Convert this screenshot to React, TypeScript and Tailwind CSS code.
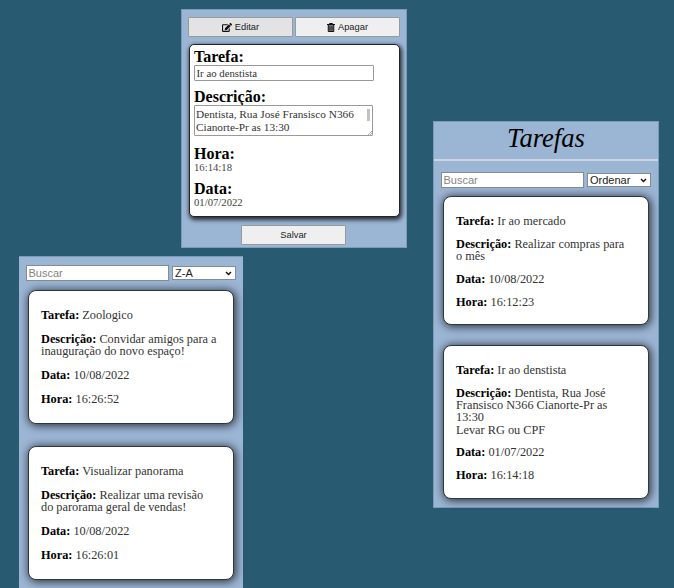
import React from "react";

type Task = { title: string; description: string[]; date: string; time: string };

const recent: Task[] = [
  { title: "Zoologico", description: ["Convidar amigos para a", "inauguração do novo espaço!"], date: "10/08/2022", time: "16:26:52" },
  { title: "Visualizar panorama", description: ["Realizar uma revisão", "do parorama geral de vendas!"], date: "10/08/2022", time: "16:26:01" },
];

const tasks: Task[] = [
  { title: "Ir ao mercado", description: ["Realizar compras para", "o mês"], date: "10/08/2022", time: "16:12:23" },
  { title: "Ir ao denstista", description: ["Dentista, Rua José", "Fransisco N366 Cianorte-Pr as", "13:30", "Levar RG ou CPF"], date: "01/07/2022", time: "16:14:18" },
];

function Label({ children }: { children: React.ReactNode }) {
  return <strong className="font-bold text-black">{children}</strong>;
}

function TaskCard({ task, className }: { task: Task; className: string }) {
  return (
    <article className={`flex w-[206px] shrink-0 flex-col whitespace-nowrap rounded-[8px] border border-[#30363e] bg-white pl-3 text-[12.3px] leading-[12.2px] text-[#333] shadow-[1px_1px_8px_1px_rgba(0,0,0,0.7)] ${className}`}>
      <p><Label>Tarefa:</Label> {task.title}</p>
      <p>
        <Label>Descrição:</Label>{" "}
        {task.description.map((line, i) => (
          <React.Fragment key={line}>{i > 0 && <br />}{line}</React.Fragment>
        ))}
      </p>
      <p><Label>Data:</Label> {task.date}</p>
      <p><Label>Hora:</Label> {task.time}</p>
    </article>
  );
}

function Toolbar({ order, className }: { order: string; className: string }) {
  return (
    <div className={`flex items-center gap-[3px] font-['Liberation_Sans',sans-serif] ${className}`}>
      <input placeholder="Buscar" className="h-4 w-[143px] rounded-none border border-[#858b92] bg-white px-[1.5px] text-[11px] leading-none placeholder:text-[#858585]" />
      <div className="flex h-[14px] w-16 items-center justify-between border border-[#858b92] bg-white pl-[2px] pr-[3px] text-[11px] leading-none text-[#222]">
        <span>{order}</span>
        <svg viewBox="0 0 8 6" className="h-[5px] w-[7px]" fill="none" stroke="#111" strokeWidth="1.7"><path d="M1 1.3 4 4.3 7 1.3" /></svg>
      </div>
    </div>
  );
}

const button = "flex h-[20px] w-[105px] items-center justify-center gap-[3px] rounded-[1px] border border-[#999] pt-px text-[9.3px] leading-none text-[#222] font-['Liberation_Sans',sans-serif]";

function Editor() {
  return (
    <section className="ml-[181px] mt-[9px] h-[239px] w-[226px] border border-[#7b9bb9] bg-[#9bb5d4] pl-[6px] pt-[7px]">
      <div className="flex gap-[2px]">
        <button className={`${button} bg-[#e3e3e3]`}>
          <svg viewBox="0 0 576 512" className="mb-px h-[9px] w-[10px]" fill="#111"><path d="M402.600 83.200l90.200 90.200c3.800 3.800 3.800 10 0 13.800L274.400 405.600l-92.800 10.300c-12.400 1.400-22.900-9.100-21.500-21.500l10.300-92.800L388.800 83.200c3.800-3.800 10-3.800 13.800 0zm162-22.900l-48.800-48.800c-15.200-15.200-39.900-15.200-55.200 0l-35.400 35.400c-3.800 3.800-3.800 10 0 13.800l90.200 90.200c3.800 3.800 10 3.800 13.800 0l35.400-35.400c15.200-15.300 15.200-40 0-55.200zM384 346.200V448H64V128h229.800c3.200 0 6.200-1.300 8.500-3.500l40-40c7.600-7.600 2.200-20.500-8.500-20.500H48C21.500 64 0 85.500 0 112v352c0 26.500 21.500 48 48 48h352c26.500 0 48-21.500 48-48V306.200c0-10.700-12.900-16-20.500-8.500l-40 40c-2.200 2.300-3.500 5.300-3.500 8.500z" /></svg>
          <span className="h-[10px]">Editar</span>
        </button>
        <button className={`${button} gap-[2px] bg-[#efefef]`}>
          <svg viewBox="0 0 16 18" className="mb-px h-[9px] w-2" fill="none" stroke="#111" strokeWidth="2">
            <path d="M0 3H16M5 2V1H11V2" />
            <path d="M2.500 4V17H13.500V4" fill="#777" />
            <path d="M6 6.500V14.500M10 6.500V14.500" strokeWidth="1.700" />
          </svg>
          <span className="h-[10px]">Apagar</span>
        </button>
      </div>
      <div className="ml-[1px] mt-[7px] flex h-[173px] w-[211px] flex-col rounded-[5px] border border-[#20242a] bg-white pl-[4px] pt-[4px] text-[10.7px] leading-3 text-[#444] shadow-[1px_2px_4px_1px_rgba(0,0,0,0.75)]">
        <h2 className="text-[16px] font-bold leading-4 text-black">Tarefa:</h2>
        <input defaultValue="Ir ao denstista" className="h-4 w-[180px] rounded-[1px] border border-[#999] px-[1.5px] pb-px text-[10.8px] leading-3 text-[#333]" />
        <h2 className="mt-2 text-[16px] font-bold leading-4 text-black">Descrição:</h2>
        <div className="relative flex h-[31px] w-[179px] flex-col rounded-[1px] border border-[#999] pl-[1px] pt-[2px] text-[11.3px] leading-[13px] text-[#333]">
          <span>Dentista, Rua José Fransisco N366</span>
          <span>Cianorte-Pr as 13:30</span>
          <div className="absolute right-[2px] top-[3px] h-[12px] w-[3px] bg-[#c1c1c1]" />
          <svg className="absolute bottom-0 right-0 h-[4px] w-[4px]" viewBox="0 0 4 4" stroke="#777" strokeWidth=".6"><path d="M0 4 4 0M2 4 4 2" /></svg>
        </div>
        <h2 className="mt-[10px] text-[16px] font-bold leading-4 text-black">Hora:</h2>
        <p className="leading-[10px]">16:14:18</p>
        <h2 className="mt-[9px] text-[16px] font-bold leading-4 text-black">Data:</h2>
        <p className="leading-[10px]">01/07/2022</p>
      </div>
      <button className={`${button} ml-[53px] mt-[8px] bg-[#efefef]`}><span className="h-[10px]">Salvar</span></button>
    </section>
  );
}

export default function App() {
  return (
    <main className="flex h-[588px] w-[674px] items-start overflow-hidden bg-[#285a72] font-['Liberation_Serif',serif]">
      <div className="flex h-[588px] w-[407px] shrink-0 flex-col">
        <Editor />
        <section className="ml-[19px] mt-2 h-[332px] w-[224px] border-t border-[#7b9bb9] bg-[#9bb5d4]">
          <Toolbar order="Z-A" className="ml-[7px] mt-2" />
          <div className="ml-[9px] mt-[9px] flex flex-col gap-[22px]">
            <TaskCard task={recent[0]} className="h-[134px] gap-[11.7px] pt-[18px]" />
            <TaskCard task={recent[1]} className="h-[134px] gap-[11.7px] pt-[18px]" />
          </div>
        </section>
      </div>
      <section className="ml-[26px] mt-[121px] h-[387px] w-[226px] shrink-0 border border-[#7b9bb9] bg-[#9bb5d4]">
        <h1 className="h-[39px] border-b-2 border-[#cdd5df] text-center text-[26.6px] italic leading-[32px] text-black">Tarefas</h1>
        <Toolbar order="Ordenar" className="ml-[7px] mt-[11px]" />
        <div className="ml-[9px] mt-2 flex flex-col gap-5">
          <TaskCard task={tasks[0]} className="h-[129px] gap-[10.7px] pt-[18px]" />
          <TaskCard task={tasks[1]} className="h-[154px] gap-[10.7px] pt-[18px]" />
        </div>
      </section>
    </main>
  );
}
